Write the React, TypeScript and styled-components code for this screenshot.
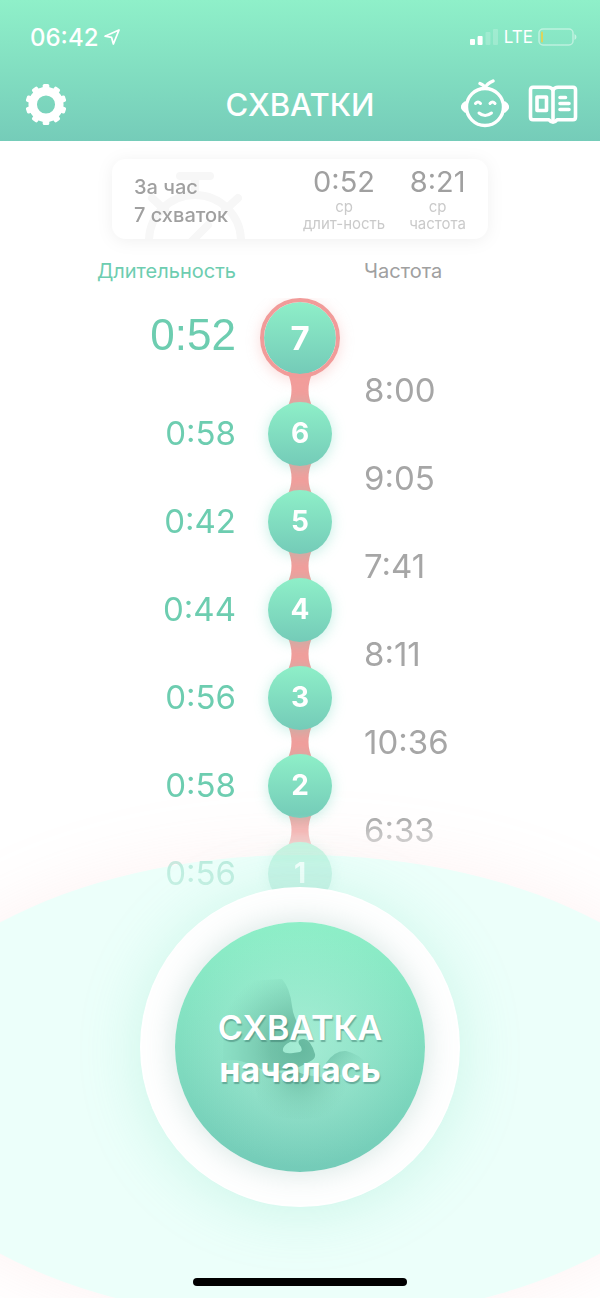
import React from "react";
import styled, { createGlobalStyle } from "styled-components";

const GlobalStyle = createGlobalStyle`
  *, *::before, *::after { box-sizing: border-box; }
  body { margin: 0; background: #fff; }
  body, button { font-family: Inter, "Liberation Sans", sans-serif; }
`;

const Page = styled.div`
  display: flex;
  flex-direction: column;
  min-height: 100vh;
  overflow: hidden;
  background: #fff;
`;

const Header = styled.header`
  padding-bottom: 7px;
  color: #fff;
  background: linear-gradient(#8ff0c9, #75ccb9);
`;

const StatusBar = styled.div`
  display: flex;
  align-items: center;
  justify-content: space-between;
  height: 74px;
  padding: 0 23px 0 30px;
`;

const StatusGroup = styled.div<{ $gap: number }>`
  display: flex;
  align-items: center;
  gap: ${(p) => p.$gap}px;
`;

const Clock = styled.span`
  font-size: 24px;
  font-weight: 500;
`;

const Network = styled.span`
  font-size: 17px;
`;

const NavBar = styled.nav`
  display: grid;
  grid-template-columns: 1fr auto 1fr;
  align-items: center;
  height: 60px;
  padding: 0 22px;
`;

const Title = styled.h1`
  margin: 0;
  font-size: 31px;
  font-weight: 500;
`;

const NavActions = styled.div`
  display: flex;
  align-items: center;
  justify-content: flex-end;
  gap: 19px;
`;

const IconButton = styled.button`
  display: flex;
  justify-self: start;
  padding: 0;
  border: 0;
  background: none;
  color: inherit;
  cursor: pointer;
`;

const Main = styled.main`
  display: flex;
  flex: 1;
  flex-direction: column;
`;

const SummaryCard = styled.section`
  position: relative;
  display: flex;
  align-items: center;
  justify-content: space-between;
  width: calc(100% - 32px);
  max-width: 376px;
  height: 80px;
  margin: 18px auto 0;
  padding: 0 22px;
  overflow: hidden;
  border-radius: 14px;
  color: #a0a0a0;
`;

const CardShadow = styled.div`
  filter: drop-shadow(0 2px 8px rgba(0, 0, 0, 0.06));

  ${SummaryCard} {
    background: #fff;
  }
`;

const Watermark = styled.svg`
  position: absolute;
  left: 32px;
  top: 10px;
`;

const SummaryText = styled.p`
  position: relative;
  margin: 0;
  padding-top: 4px;
  font-size: 20px;
  line-height: 28px;
  font-weight: 500;
`;

const Stats = styled.div`
  display: flex;
  gap: 24px;
`;

const Stat = styled.div`
  text-align: center;
`;

const StatValue = styled.div`
  font-size: 29px;
  line-height: 32px;
`;

const StatLabel = styled.div`
  font-size: 15px;
  line-height: 17px;
  color: #cacaca;
`;

const Columns = styled.div`
  display: grid;
  grid-template-columns: 1fr 80px 1fr;
  column-gap: 24px;
  align-items: center;
`;

const ColumnTitles = styled(Columns)`
  margin: 20px 0 15px;
  font-size: 20px;
  line-height: 24px;
`;

const ColumnTitle = styled.h2<{ $side: "left" | "right" }>`
  grid-column: ${(p) => (p.$side === "left" ? 1 : 3)};
  margin: 0;
  font: inherit;
  text-align: ${(p) => (p.$side === "left" ? "right" : "left")};
  color: ${(p) => (p.$side === "left" ? "#6dcdb0" : "#a0a0a0")};
`;

const Timeline = styled.ol`
  position: relative;
  z-index: 1;
  margin: 0;
  padding: 0;
  list-style: none;
  mask-image: linear-gradient(
    to top,
    rgba(0, 0, 0, 0.25) 0,
    rgba(0, 0, 0, 0.36) 42px,
    rgba(0, 0, 0, 0.52) 63px,
    #000 92px
  );
`;

const Entry = styled(Columns)<{ $latest: boolean }>`
  height: ${(p) => (p.$latest ? 80 : 64)}px;
`;

const Duration = styled.div<{ $latest: boolean }>`
  text-align: right;
  font-family: ${(p) => (p.$latest ? '"Liberation Sans", sans-serif' : "inherit")};
  font-size: ${(p) => (p.$latest ? 44 : 33)}px;
  line-height: 60px;
  padding-bottom: ${(p) => (p.$latest ? 6 : 2)}px;
  color: #6dcdb0;
`;

const Node = styled.div<{ $latest: boolean }>`
  position: relative;
  z-index: 1;
  display: flex;
  align-items: center;
  justify-content: center;
  justify-self: center;
  width: ${(p) => (p.$latest ? 80 : 64)}px;
  height: ${(p) => (p.$latest ? 80 : 64)}px;
  padding-bottom: ${(p) => (p.$latest ? 0 : 2)}px;
  border: ${(p) => (p.$latest ? "4px solid #f19b99" : "0")};
  border-radius: 50%;
  background: linear-gradient(#8eefc8, #74cbb8) padding-box;
  box-shadow: ${(p) =>
    p.$latest
      ? "0 3px 14px rgba(241, 155, 153, 0.35)"
      : "0 2px 14px rgba(110, 215, 190, 0.4)"};
  color: #fff;
  font-size: ${(p) => (p.$latest ? 33 : 28)}px;
  font-weight: 700;
`;

const Interval = styled(Columns)`
  height: 24px;
`;

const Connector = styled.svg`
  grid-column: 2;
  justify-self: center;
  margin: -6px 0;
`;

const Frequency = styled.div`
  font-size: 33px;
  line-height: 24px;
  color: #a6a6a6;
`;

const Footer = styled.footer`
  position: relative;
  display: flex;
  flex: 1;
  flex-direction: column;
  align-items: center;
  justify-content: space-between;
  gap: 40px;
  margin-top: -19px;
  padding-bottom: 12px;

  &::before {
    content: "";
    position: absolute;
    top: -32px;
    left: -21%;
    width: 142%;
    height: 466px;
    border-radius: 50%;
    background: #ecfffa;
    box-shadow: 0 0 70px rgba(250, 170, 165, 0.15);
  }
`;

const Ring = styled.div`
  position: relative;
  z-index: 2;
  padding: 35px;
  border-radius: 50%;
  background: #fff;
  box-shadow: 0 4px 60px rgba(120, 220, 190, 0.28);
`;

const StartButton = styled.button`
  display: grid;
  place-items: center;
  width: 250px;
  height: 250px;
  padding: 0;
  border: 0;
  border-radius: 50%;
  background:
    radial-gradient(circle, rgba(190, 246, 226, 0.6), rgba(190, 246, 226, 0) 68%),
    linear-gradient(#8eefc8, #74cbb8);
  box-shadow: 0 0 32px rgba(90, 150, 140, 0.26);
  color: #fff;
  font-size: 34px;
  line-height: 42px;
  font-weight: 600;
  text-shadow: 1px 2px 1px rgba(50, 110, 100, 0.45);
  cursor: pointer;

  > * {
    grid-area: 1 / 1;
  }
`;

const StartLabel = styled.span`
  position: relative;
  padding-top: 4px;
`;

const StartVerb = styled.strong`
  font-weight: 700;
`;

const Belly = styled.svg`
  display: block;
`;

const HomeIndicator = styled.div`
  position: relative;
  width: 214px;
  height: 8px;
  border-radius: 4px;
  background: #000;
`;

const entries = [
  { number: 7, duration: "0:52", frequency: "8:00" },
  { number: 6, duration: "0:58", frequency: "9:05" },
  { number: 5, duration: "0:42", frequency: "7:41" },
  { number: 4, duration: "0:44", frequency: "8:11" },
  { number: 3, duration: "0:56", frequency: "10:36" },
  { number: 2, duration: "0:58", frequency: "6:33" },
  { number: 1, duration: "0:56", frequency: null },
];

const LocationIcon = () => (
  <svg width="18" height="18" viewBox="0 0 18 18" fill="none" stroke="#fff" strokeWidth="1.8" strokeLinejoin="round" aria-hidden="true">
    <path d="M16 2 2 8.2l6.6 1.2L10.4 16Z" />
  </svg>
);

const SignalIcon = () => (
  <svg width="29" height="18" viewBox="0 0 29 18" fill="#fff" aria-hidden="true">
    <rect x="0" y="11" width="5" height="6" rx="1" />
    <rect x="7.600" y="8" width="5" height="9" rx="1" />
    <rect x="15.500" y="4" width="5" height="13" rx="1" opacity=".2" />
    <rect x="23" y="1" width="5" height="16" rx="1" opacity=".2" />
  </svg>
);

const BatteryIcon = () => (
  <svg width="39" height="18" viewBox="0 0 39 18" aria-hidden="true">
    <rect x="1" y="1" width="34" height="16" rx="4" fill="none" stroke="#fff" strokeOpacity=".45" strokeWidth="1.500" />
    <rect x="3" y="3.500" width="2" height="11" rx="1" fill="#dcd45c" />
    <path d="M36.500 6v6q2-1 2-3t-2-3Z" fill="#fff" fillOpacity=".5" />
  </svg>
);

const GearIcon = () => (
  <svg width="48" height="42" viewBox="-24 -21.500 48 42" aria-hidden="true">
    <circle r="13.300" fill="none" stroke="#fff" strokeWidth="8.500" />
    {Array.from({ length: 10 }, (_, i) => (
      <rect key={i} x="-3.300" y="-20.500" width="6.600" height="6" rx="1.600" fill="#fff" transform={`rotate(${i * 36})`} />
    ))}
  </svg>
);

const BabyIcon = () => (
  <svg width="48" height="50" viewBox="0 -2 48 50" fill="none" stroke="#fff" strokeWidth="3.400" strokeLinecap="round" strokeLinejoin="round" aria-hidden="true">
    <circle cx="24" cy="26" r="18.500" />
    <path d="M24 7q2-4.500 8-7M24 7q-1-3-5-4.500" />
    <path d="M4.500 22q-6 4 0 8ZM43.500 22q6 4 0 8Z" fill="#fff" />
    <path d="M14.500 22.500q2.500-3 5 0M29 22.500q2.500-3 5 0" strokeWidth="3" />
    <path d="M18 32q6 5 12.500 0" strokeWidth="3" />
  </svg>
);

const BookIcon = () => (
  <svg width="50" height="42" viewBox="0 -2 50 42" fill="none" stroke="#fff" strokeWidth="3.600" strokeLinecap="round" strokeLinejoin="round" aria-hidden="true">
    <path d="M25 5q-1.500-2.800-5-2.800H5Q2.500 2.200 2.500 5v27q0 2.800 2.500 2.800h16q2 2.400 4 2.400t4-2.400h16q2.500 0 2.500-2.800V5q0-2.800-2.500-2.800H30q-3.500 0-5 2.800Z" />
    <path d="M25 5v31" />
    <rect x="9" y="12" width="9.500" height="13.500" />
    <path d="M32 12.500h5.500M32 18.500h9M32 24.500h9" />
  </svg>
);

const StopwatchMark = () => (
  <Watermark width="104" height="70" viewBox="0 0 104 70" fill="none" stroke="#f7f7f7" strokeWidth="8" aria-hidden="true">
    <circle cx="51" cy="72" r="46" />
    <path d="M36 7h30M51 8v18M8 29l13 12M94 29 81 41M48 72l16-16" strokeLinecap="round" />
  </Watermark>
);

const BellyArt = () => (
  <Belly width="250" height="250" viewBox="0 0 250 250" aria-hidden="true">
    <defs>
      <radialGradient id="torso" gradientUnits="userSpaceOnUse" cx="124" cy="126" r="82">
        <stop offset="0" stopColor="#4fa68c" stopOpacity=".75" />
        <stop offset=".35" stopColor="#55a98f" stopOpacity=".6" />
        <stop offset=".7" stopColor="#62b89e" stopOpacity=".32" />
        <stop offset="1" stopColor="#6fc5aa" stopOpacity="0" />
      </radialGradient>
      <radialGradient id="lap" gradientUnits="userSpaceOnUse" cx="124" cy="152" r="50">
        <stop offset="0" stopColor="#55a98f" stopOpacity=".6" />
        <stop offset="1" stopColor="#6fc5aa" stopOpacity="0" />
      </radialGradient>
      <linearGradient id="knee" x1="0" y1="0" x2="1" y2=".5">
        <stop offset=".1" stopColor="#57ad95" stopOpacity=".55" />
        <stop offset="1" stopColor="#6fc5aa" stopOpacity="0" />
      </linearGradient>
    </defs>
    <path
      d="M107 57Q115 66 117 84 118 94 124 104L124 112Q122 117 115 120 107 124 108 129 110 132 118 131L125 130Q129 128 124 122 122 117 129 117 136 118 140 132 141 137 134 140L120 147Q92 152 76 143 62 136 48 139L50 60Z"
      fill="url(#torso)"
    />
    <path d="M151 141Q160 128 171 129 184 132 192 142L184 155 158 152Z" fill="url(#knee)" />
    <path d="M76 146Q98 154 120 149 140 158 176 154 180 170 168 190 125 204 84 190 82 168 76 146Z" fill="url(#lap)" />
  </Belly>
);

export default function App() {
  return (
    <Page>
      <GlobalStyle />
      <Header>
        <StatusBar>
          <StatusGroup $gap={5}>
            <Clock>06:42</Clock>
            <LocationIcon />
          </StatusGroup>
          <StatusGroup $gap={5}>
            <SignalIcon />
            <Network>LTE</Network>
            <BatteryIcon />
          </StatusGroup>
        </StatusBar>
        <NavBar>
          <IconButton type="button" aria-label="Настройки">
            <GearIcon />
          </IconButton>
          <Title>СХВАТКИ</Title>
          <NavActions>
            <IconButton type="button" aria-label="Малыш">
              <BabyIcon />
            </IconButton>
            <IconButton type="button" aria-label="Справка">
              <BookIcon />
            </IconButton>
          </NavActions>
        </NavBar>
      </Header>
      <Main>
        <CardShadow>
          <SummaryCard>
            <StopwatchMark />
            <SummaryText>
              За час
              <br />7 схваток
            </SummaryText>
            <Stats>
              <Stat>
                <StatValue>0:52</StatValue>
                <StatLabel>ср</StatLabel>
                <StatLabel>длит-ность</StatLabel>
              </Stat>
              <Stat>
                <StatValue>8:21</StatValue>
                <StatLabel>ср</StatLabel>
                <StatLabel>частота</StatLabel>
              </Stat>
            </Stats>
          </SummaryCard>
        </CardShadow>
        <ColumnTitles>
          <ColumnTitle $side="left">Длительность</ColumnTitle>
          <ColumnTitle $side="right">Частота</ColumnTitle>
        </ColumnTitles>
        <Timeline>
          {entries.map(({ number, duration, frequency }, i) => (
            <li key={number}>
              <Entry $latest={i === 0}>
                <Duration $latest={i === 0}>{duration}</Duration>
                <Node $latest={i === 0}>{number}</Node>
              </Entry>
              {frequency && (
                <Interval>
                  <Connector width="28" height="36" viewBox="0 0 28 36" aria-hidden="true">
                    <path d="M1 0h26q-9 18 0 36H1q9-18 0-36Z" fill="#f29e9c" />
                  </Connector>
                  <Frequency>{frequency}</Frequency>
                </Interval>
              )}
            </li>
          ))}
        </Timeline>
        <Footer>
          <Ring>
            <StartButton type="button">
              <BellyArt />
              <StartLabel>
                СХВАТКА
                <br />
                <StartVerb>началась</StartVerb>
              </StartLabel>
            </StartButton>
          </Ring>
          <HomeIndicator />
        </Footer>
      </Main>
    </Page>
  );
}
